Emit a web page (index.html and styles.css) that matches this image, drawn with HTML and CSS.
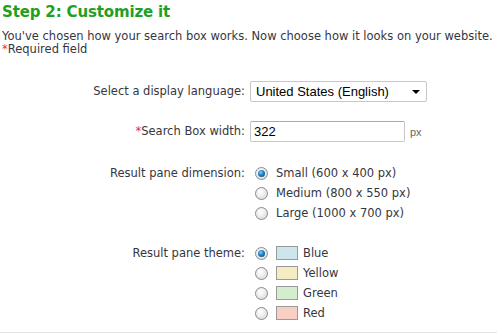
FILE: index.html
```html
<!DOCTYPE html>
<html>
<head>
<meta charset="utf-8">
<link rel="stylesheet" href="styles.css">
</head>
<body>
<div class="page">
  <h1 class="title">Step 2: Customize it</h1>
  <p class="intro">You've chosen how your search box works. Now choose how it looks on your website.<br><span class="req">*</span>Required field</p>
  <div class="form">
    <div class="row row-lang">
      <div class="label">Select a display language:</div>
      <div class="field">
        <div class="select"><span>United States (English)</span><span class="arrow"></span></div>
      </div>
    </div>
    <div class="row row-width">
      <div class="label"><span class="req">*</span>Search Box width:</div>
      <div class="field field-inline">
        <div class="input">322</div><span class="unit">px</span>
      </div>
    </div>
    <div class="row row-dim">
      <div class="label">Result pane dimension:</div>
      <div class="field options">
        <div class="opt"><span class="radio on"></span><span class="txt">Small (600 x 400 px)</span></div>
        <div class="opt"><span class="radio"></span><span class="txt">Medium (800 x 550 px)</span></div>
        <div class="opt"><span class="radio"></span><span class="txt">Large (1000 x 700 px)</span></div>
      </div>
    </div>
    <div class="row row-theme">
      <div class="label">Result pane theme:</div>
      <div class="field options">
        <div class="opt"><span class="radio on"></span><span class="swatch blue"></span><span>Blue</span></div>
        <div class="opt"><span class="radio"></span><span class="swatch yellow"></span><span>Yellow</span></div>
        <div class="opt"><span class="radio"></span><span class="swatch green"></span><span>Green</span></div>
        <div class="opt"><span class="radio"></span><span class="swatch red"></span><span>Red</span></div>
      </div>
    </div>
  </div>
  <div class="bottom"></div>
</div>
</body>
</html>
```
FILE: styles.css
```css
html, body { margin: 0; padding: 0; background: #fff; }
body { font-family: "DejaVu Sans", Verdana, sans-serif; font-size: 11.5px; color: #363640; }
.page { padding: 0 2px; width: 493px; height: 336px; position: relative; overflow: hidden; }
.title { margin: 0; padding-top: 3px; font-size: 15px; font-weight: bold; color: #1fa01f; line-height: 18px; letter-spacing: -0.15px; }
.intro { margin: 9px 0 0; line-height: 13px; }
.req { color: #e0344b; }
.form { margin-top: 25px; }
.row { display: grid; grid-template-columns: 243px 1fr; column-gap: 5px; }
.label { text-align: right; line-height: 20px; }
.field { display: flex; flex-direction: column; }
.field-inline { flex-direction: row; align-items: center; }
.select { box-sizing: border-box; width: 177px; height: 21px; border: 1px solid #c8c8c8; border-radius: 2px; display: flex; align-items: center; justify-content: space-between; padding: 0 6px 0 5px; font-family: "Liberation Sans", Arial, sans-serif; font-size: 13px; color: #000; }
.arrow { width: 0; height: 0; border-left: 4px solid transparent; border-right: 4px solid transparent; border-top: 4px solid #000; }
.row-width { margin-top: 19px; }
.input { box-sizing: border-box; width: 155px; height: 21px; border: 1px solid #c8c8c8; border-top-color: #aaa; border-radius: 2px; padding: 0 3px; line-height: 19px; font-family: "Liberation Sans", Arial, sans-serif; font-size: 13px; color: #000; }
.unit { margin-left: 5px; font-family: "Liberation Sans", Arial, sans-serif; font-size: 11px; color: #666; }
.row-dim { margin-top: 21px; }
.row-theme { margin-top: 20px; }
.opt { display: flex; align-items: center; height: 20px; }
.radio { box-sizing: border-box; width: 13px; height: 13px; border-radius: 50%; border: 1px solid #8a8a8a; background: radial-gradient(circle at 40% 35%, #ffffff 0%, #f0f0f0 40%, #cfcfcf 100%); margin: 0 0 0 5px; position: relative; flex: none; }
.radio.on::after { content: ""; position: absolute; left: 2px; top: 2px; width: 7px; height: 7px; border-radius: 50%; background: radial-gradient(circle at 40% 35%, #7fd0ff 0%, #1b7fc4 45%, #0b3f70 100%); }
.txt { margin-left: 8px; }
.swatch { box-sizing: border-box; width: 22px; height: 14px; border: 1px solid #9a9a9a; margin: 0 5px 0 8px; flex: none; }
.swatch.blue { background: #cce6ec; }
.swatch.yellow { background: #f6ecc2; }
.swatch.green { background: #d5ecce; }
.swatch.red { background: #f8cfc3; }
.bottom { position: absolute; left: 0; right: 0; top: 332px; border-top: 1px solid #e4e4e4; }
```
